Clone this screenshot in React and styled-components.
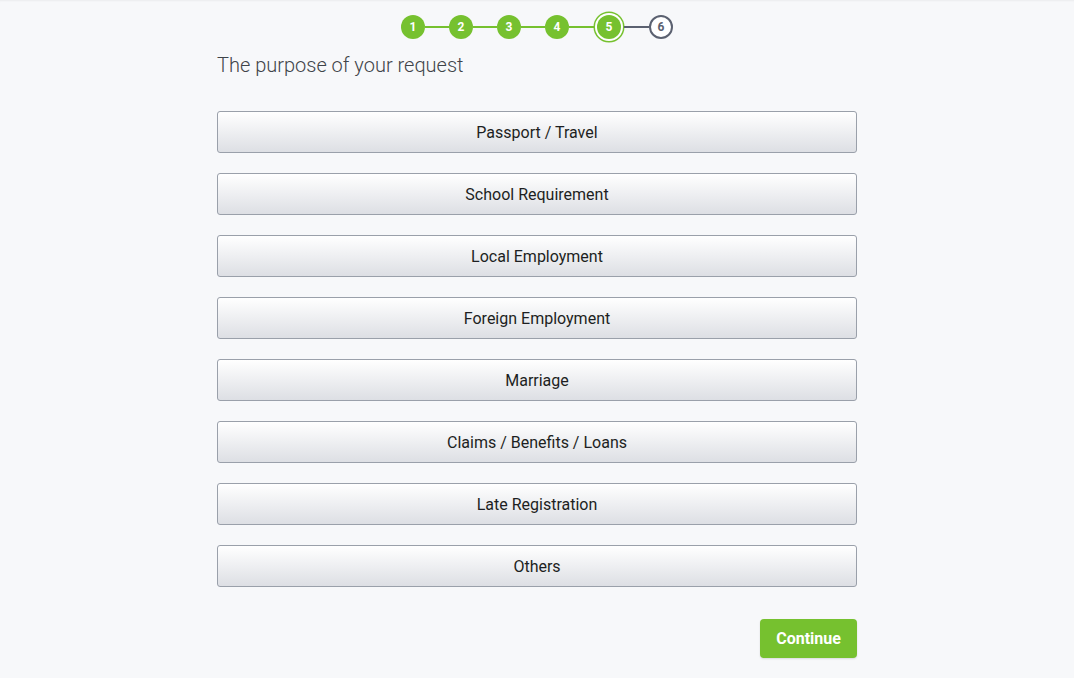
import React, { useState } from "react";
import styled, { createGlobalStyle, css } from "styled-components";

const GlobalStyle = createGlobalStyle`
  html, body {
    margin: 0;
    padding: 0;
    background: #f7f8fa;
    font-family: Roboto, "Liberation Sans", Arial, sans-serif;
  }
`;

const GREEN = "#76c12f";

const purposes = [
  "Passport / Travel",
  "School Requirement",
  "Local Employment",
  "Foreign Employment",
  "Marriage",
  "Claims / Benefits / Loans",
  "Late Registration",
  "Others",
];

function App() {
  const [selected, setSelected] = useState(null);
  const steps = [1, 2, 3, 4, 5, 6];
  const current = 5;

  return (
    <Page>
      <GlobalStyle />
      <Stepper>
        {steps.map((n, i) => (
          <React.Fragment key={n}>
            {i > 0 && <Connector $done={n <= current} $wide={n >= current} />}
            <Step $state={n < current ? "done" : n === current ? "current" : "todo"}>
              {n}
            </Step>
          </React.Fragment>
        ))}
      </Stepper>
      <Content>
        <Title>The purpose of your request</Title>
        <Options>
          {purposes.map((p) => (
            <Option key={p} $active={selected === p} onClick={() => setSelected(p)}>
              {p}
            </Option>
          ))}
        </Options>
        <Footer>
          <ContinueButton>Continue</ContinueButton>
        </Footer>
      </Content>
    </Page>
  );
}

const Page = styled.div`
  min-height: 678px;
  box-shadow: inset 0 2px 2px -1px rgba(0, 0, 0, 0.05);
  padding-top: 15px;
  box-sizing: border-box;
`;

const Stepper = styled.div`
  display: flex;
  justify-content: center;
  align-items: center;
  height: 24px;
`;

const Connector = styled.div`
  width: ${(p) => (p.$wide ? 25 : 24)}px;
  height: 2px;
  background: ${(p) => (p.$done ? GREEN : "#5b6170")};
`;

const Step = styled.div`
  width: 24px;
  height: 24px;
  border-radius: 50%;
  box-sizing: border-box;
  display: flex;
  align-items: center;
  justify-content: center;
  font-size: 12px;
  font-weight: 700;
  flex-shrink: 0;
  ${(p) =>
    p.$state === "todo"
      ? css`
          background: #fff;
          border: 2px solid #5b6170;
          color: #5b6170;
        `
      : css`
          background: ${GREEN};
          color: #fff;
        `}
  ${(p) =>
    p.$state === "current" &&
    css`
      margin: 0 3px;
      box-shadow: 0 0 0 2px #fff, 0 0 0 3.5px ${GREEN};
    `}
`;

const Content = styled.div`
  width: 640px;
  margin: 0 auto;
`;

const Title = styled.h1`
  margin: 13px 0 0;
  font-size: 20px;
  line-height: 26px;
  font-weight: 300;
  color: #3f4449;
`;

const Options = styled.div`
  display: flex;
  flex-direction: column;
  gap: 20px;
  margin-top: 33px;
`;

const Option = styled.button`
  height: 42px;
  width: 100%;
  border: 1px solid #9aa0aa;
  border-radius: 3px;
  background: ${(p) =>
    p.$active
      ? "linear-gradient(to bottom, #eef7e6, #d4e9c0)"
      : "linear-gradient(to bottom, #ffffff, #dddfe4)"};
  font-family: Roboto, "Liberation Sans", Arial, sans-serif;
  font-size: 16px;
  color: #1d1f22;
  cursor: pointer;
  padding: 0;
`;

const Footer = styled.div`
  display: flex;
  justify-content: flex-end;
  margin-top: 32px;
`;

const ContinueButton = styled.button`
  width: 97px;
  height: 39px;
  border: none;
  border-radius: 4px;
  background: ${GREEN};
  color: #fff;
  font-family: Roboto, "Liberation Sans", Arial, sans-serif;
  font-size: 16px;
  font-weight: 700;
  box-shadow: 0 1px 2px rgba(0, 0, 0, 0.12);
  cursor: pointer;
`;

export default App;
